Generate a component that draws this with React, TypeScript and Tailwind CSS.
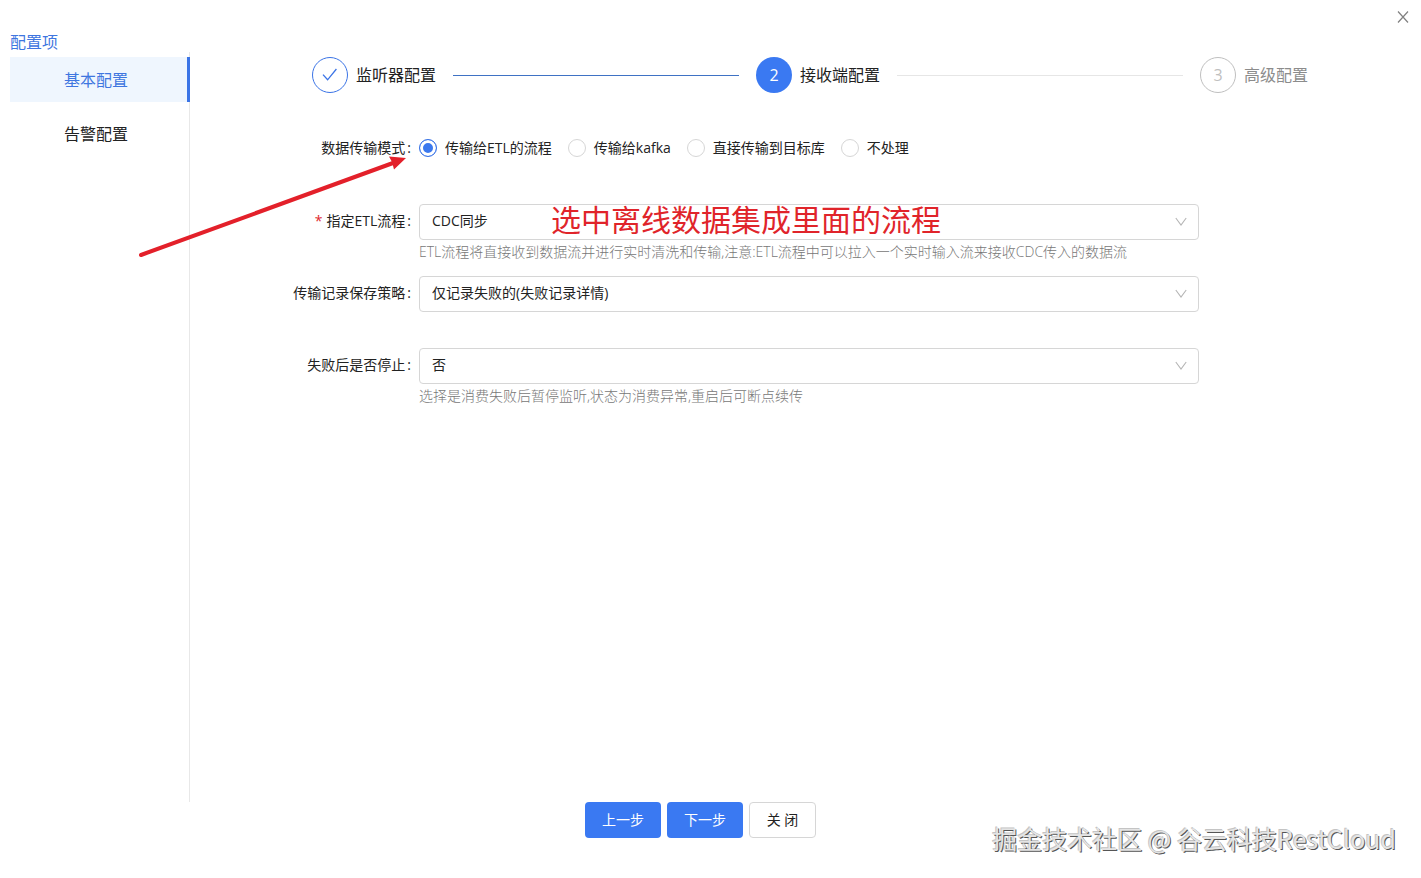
import React, { useState } from 'react';

interface Field {
  id: string;
  label: string;
  required?: boolean;
  options: string[];
  hint?: string;
}

const menus = ['基本配置', '告警配置'];

const modes = ['传输给ETL的流程', '传输给kafka', '直接传输到目标库', '不处理'];

const fields: Field[] = [
  {
    id: 'etl-flow',
    label: '指定ETL流程',
    required: true,
    options: ['CDC同步'],
    hint: 'ETL流程将直接收到数据流并进行实时清洗和传输,注意:ETL流程中可以拉入一个实时输入流来接收CDC传入的数据流',
  },
  {
    id: 'record-policy',
    label: '传输记录保存策略',
    options: ['仅记录失败的(失败记录详情)'],
  },
  {
    id: 'stop-on-fail',
    label: '失败后是否停止',
    options: ['否', '是'],
    hint: '选择是消费失败后暂停监听,状态为消费异常,重启后可断点续传',
  },
];

function Colon() {
  return <span className="ml-0.5 mr-2">:</span>;
}

function Steps() {
  return (
    <ol className="flex items-center pl-[122px] pr-[113px] text-base text-[#222]">
      <li className="flex shrink-0 items-center gap-2">
        <span className="flex h-9 w-9 items-center justify-center rounded-full border border-[#3b74e6]">
          <svg width="16" height="16" viewBox="0 0 16 16" fill="none" stroke="#3b74e6" strokeWidth="1.3">
            <path d="M1 7.6 L5.6 12.8 L14.4 2" />
          </svg>
        </span>
        监听器配置
      </li>
      <li aria-hidden="true" className="mx-[17px] h-px flex-1 bg-[#3f72c4]" />
      <li className="flex shrink-0 items-center gap-2" aria-current="step">
        <span className="flex h-9 w-9 items-center justify-center rounded-full bg-[#3a79f2] text-white">2</span>
        接收端配置
      </li>
      <li aria-hidden="true" className="mx-[17px] h-px flex-1 bg-[#e6e6e6]" />
      <li className="flex shrink-0 items-center gap-2 text-[#8c8c8c]">
        <span className="flex h-9 w-9 items-center justify-center rounded-full border border-[#bfbfbf] text-[#bfbfbf]">
          3
        </span>
        高级配置
      </li>
    </ol>
  );
}

function SelectRow({ field, children }: { field: Field; children?: React.ReactNode }) {
  return (
    <div className="flex min-h-[72px]">
      <label htmlFor={field.id} className="flex h-9 w-[229px] shrink-0 items-center justify-end pb-0.5">
        {field.required && <span className="mr-1 text-[#e0282e]">*</span>}
        {field.label}
        <Colon />
      </label>
      <div className="min-w-0 flex-1">
        <div className="relative">
          <select
            id={field.id}
            className="block h-9 w-full appearance-none rounded border border-[#d6d6d6] bg-white px-3 pb-0.5 outline-none"
          >
            {field.options.map(o => (
              <option key={o}>{o}</option>
            ))}
          </select>
          <svg
            className="pointer-events-none absolute right-3 top-3"
            width="12"
            height="12"
            viewBox="0 0 12 12"
            fill="none"
            stroke="#b5b5b5"
            strokeWidth="1.1"
          >
            <path d="M0.8 2 L6 9 L11.2 2" />
          </svg>
          {children}
        </div>
        {field.hint && <p className="font-light leading-6 text-[#777]">{field.hint}</p>}
      </div>
    </div>
  );
}

export default function App() {
  const [menu, setMenu] = useState(menus[0]);
  const [mode, setMode] = useState(modes[0]);

  return (
    <div className="relative flex min-h-screen flex-col bg-white font-['Open_Sans','Noto_Sans_CJK_SC',sans-serif] text-sm text-[#222]">
      <header className="flex h-8 shrink-0 justify-end pr-3 pt-[11px]">
        <button aria-label="关闭窗口" className="h-3 w-3">
          <svg width="12" height="12" viewBox="0 0 12 12" fill="none" stroke="#808080" strokeWidth="1.2">
            <path d="M1 0.5 L11 11.5 M11 0.5 L1 11.5" />
          </svg>
        </button>
      </header>

      <div className="flex flex-1">
        <aside className="flex w-[190px] shrink-0 flex-col pl-2.5">
          <h2 className="h-5 text-base leading-5 text-[#3f76e0]">配置项</h2>
          <nav className="flex flex-1 flex-col gap-[9px] border-r border-[#e8e8e8] pt-[5px]">
            {menus.map(m => (
              <button
                key={m}
                onClick={() => setMenu(m)}
                className={`-mr-px h-[45px] border-r-[3px] pl-[54px] text-left text-base ${
                  m === menu ? 'border-[#3b74e6] bg-[#eff6fe] text-[#3f76e0]' : 'border-transparent'
                }`}
              >
                {m}
              </button>
            ))}
          </nav>
        </aside>

        <main className="min-w-0 flex-1 pt-[25px]">
          <Steps />

          <form className="mt-[37px] pr-[18%]">
            <div role="radiogroup" aria-labelledby="mode-label" className="mb-[38px] flex h-9 items-center">
              <span id="mode-label" className="flex w-[229px] shrink-0 justify-end">
                数据传输模式
                <Colon />
              </span>
              <div className="flex gap-4">
                {modes.map(m => (
                  <label key={m} className="flex items-center gap-2">
                    <input
                      type="radio"
                      name="mode"
                      checked={m === mode}
                      onChange={() => setMode(m)}
                      className="h-[18px] w-[18px] appearance-none rounded-full border border-[#d6d6d6] bg-white checked:border-[#3b74e6] checked:bg-[#3b78ee] checked:shadow-[inset_0_0_0_3px_#fff]"
                    />
                    {m}
                  </label>
                ))}
              </div>
            </div>

            {fields.map(f => (
              <SelectRow key={f.id} field={f}>
                {f.id === 'etl-flow' && (
                  <span className="pointer-events-none absolute left-[132px] top-0 whitespace-nowrap text-[30px] leading-8 text-[#e0242a]">
                    选中离线数据集成里面的流程
                  </span>
                )}
              </SelectRow>
            ))}
          </form>
        </main>
      </div>

      <footer className="flex shrink-0 justify-center gap-1.5 pb-10 pr-5">
        <button className="h-9 w-[76px] rounded bg-[#3a79f2] text-white">上一步</button>
        <button className="h-9 w-[76px] rounded bg-[#3a79f2] text-white">下一步</button>
        <button className="h-9 w-[67px] rounded border border-[#d6d6d6] bg-white">关 闭</button>
      </footer>

      {/* arrow pointing at the transfer mode */}
      <svg
        className="pointer-events-none absolute left-[136px] top-[152px]"
        width="274"
        height="108"
        viewBox="0 0 274 108"
        fill="#e3202a"
      >
        <path d="M5 103 L257 11" stroke="#e3202a" strokeWidth="4" strokeLinecap="round" />
        <path d="M270 6 L253 4.5 L256 10 L258 17.5 Z" />
      </svg>

      <p className="pointer-events-none absolute bottom-[22px] right-[25px] font-['Noto_Sans_CJK_SC',sans-serif] text-[25px] leading-9 text-[#e4e4e4] [text-shadow:1px_1px_0_#555,-1px_-1px_0_#c4c4c4]">
        掘金技术社区 @ 谷云科技RestCloud
      </p>
    </div>
  );
}
